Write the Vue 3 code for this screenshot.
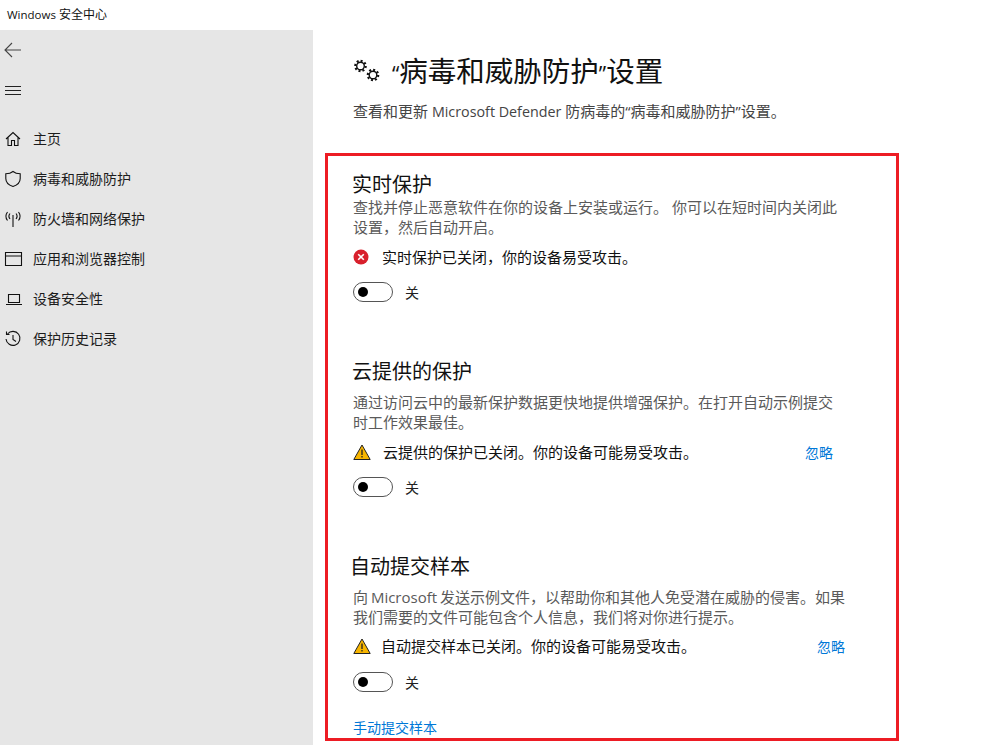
<script setup>
const nav = [
  { label: '主页', icon: 'home' },
  { label: '病毒和威胁防护', icon: 'shield' },
  { label: '防火墙和网络保护', icon: 'wifi' },
  { label: '应用和浏览器控制', icon: 'browser' },
  { label: '设备安全性', icon: 'laptop' },
  { label: '保护历史记录', icon: 'history' },
]
</script>

<template>
  <div class="window">
    <header class="titlebar"><span class="win">Windows</span> 安全中心</header>
    <div class="body">
      <aside class="sidebar">
        <div class="tool">
          <svg width="20" height="20" viewBox="0 0 20 20" fill="none" stroke="#444" stroke-width="1.1">
            <path d="M2 10H18M9 3L2 10L9 17" />
          </svg>
        </div>
        <div class="tool">
          <svg width="20" height="20" viewBox="0 0 20 20" fill="none" stroke="#222" stroke-width="1">
            <path d="M2 6.5H18M2 10.5H18M2 14.5H18" />
          </svg>
        </div>
        <nav class="nav">
          <div v-for="item in nav" :key="item.label" class="nav-item">
            <svg width="20" height="20" viewBox="0 0 20 20" fill="none" stroke="#111" stroke-width="1.1">
              <path v-if="item.icon === 'home'" d="M3 10L10 3.5L17 10M5 8.5V16.5H8.5V11.5H11.5V16.5H15V8.5" />
              <path v-else-if="item.icon === 'shield'" d="M10 2.5C8 4.2 5.5 4.8 2.8 4.8V9.5C2.8 13.5 6 16.2 10 17.5C14 16.2 17.2 13.5 17.2 9.5V4.8C14.5 4.8 12 4.2 10 2.5Z" />
              <template v-else-if="item.icon === 'wifi'">
                <path d="M10 6V18" />
                <path d="M7 4.5C5.8 6 5.8 8.5 7 10M13 4.5C14.2 6 14.2 8.5 13 10M4.5 3C2.6 5.5 2.6 9 4.5 11.5M15.5 3C17.4 5.5 17.4 9 15.5 11.5" />
              </template>
              <path v-else-if="item.icon === 'browser'" d="M2.5 3.5H18.5V16.5H2.5ZM2.5 7H18.5" />
              <path v-else-if="item.icon === 'laptop'" d="M5.5 5.5H16.5V13.5H5.5ZM3 15.5H19" />
              <template v-else>
                <path d="M4.5 5A7 7 0 1 1 3 10" />
                <path d="M3.5 2.5V5.5H6.5M10 6V10.5L13 12.5" />
              </template>
            </svg>
            <span>{{ item.label }}</span>
          </div>
        </nav>
      </aside>

      <main class="main">
        <div class="page-head">
          <svg class="gears" width="28" height="28" viewBox="0 0 28 28" fill="none" stroke="#111">
            <circle cx="7.5" cy="9" r="3.8" stroke-width="1.4" />
            <circle cx="7.5" cy="9" r="5.2" stroke-width="2.2" stroke-dasharray="2 2" />
            <circle cx="20" cy="18" r="3.8" stroke-width="1.4" />
            <circle cx="20" cy="18" r="5.2" stroke-width="2.2" stroke-dasharray="2 2" />
          </svg>
          <h1><span class="q">“</span>病毒和威胁防护<span class="q">”</span>设置</h1>
        </div>
        <p class="subtitle">查看和更新 <span class="latin">Microsoft Defender</span> 防病毒的“病毒和威胁防护”设置。</p>

        <div class="panel">
          <section class="block first">
            <h2>实时保护</h2>
            <p class="desc">查找并停止恶意软件在你的设备上安装或运行。 你可以在短时间内关闭此设置，然后自动开启。</p>
            <div class="status">
              <svg class="st-icon" width="16" height="16" viewBox="0 0 16 16">
                <circle cx="8" cy="8" r="7.5" fill="#d8202c" />
                <path d="M5.2 5.2L10.8 10.8M10.8 5.2L5.2 10.8" stroke="#fff" stroke-width="1.6" />
              </svg>
              <span class="st-text t1">实时保护已关闭，你的设备易受攻击。</span>
            </div>
            <div class="switch-row">
              <span class="switch"><i></i></span>
              <span>关</span>
            </div>
          </section>

          <section class="block second">
            <h2>云提供的保护</h2>
            <p class="desc">通过访问云中的最新保护数据更快地提供增强保护。在打开自动示例提交时工作效果最佳。</p>
            <div class="status">
              <svg class="st-icon" width="18" height="16" viewBox="0 0 18 16">
                <path d="M9 1L17.2 15.5H0.8Z" fill="#f7b500" stroke="#222" stroke-width="1" />
                <path d="M9 5.5V11M9 12V13.6" stroke="#222" stroke-width="1.3" />
              </svg>
              <span class="st-text t2">云提供的保护已关闭。你的设备可能易受攻击。</span>
              <a class="ignore">忽略</a>
            </div>
            <div class="switch-row">
              <span class="switch"><i></i></span>
              <span>关</span>
            </div>
          </section>

          <section class="block third">
            <h2>自动提交样本</h2>
            <p class="desc">向 Microsoft 发送示例文件，以帮助你和其他人免受潜在威胁的侵害。如果我们需要的文件可能包含个人信息，我们将对你进行提示。</p>
            <div class="status">
              <svg class="st-icon" width="18" height="16" viewBox="0 0 18 16">
                <path d="M9 1L17.2 15.5H0.8Z" fill="#f7b500" stroke="#222" stroke-width="1" />
                <path d="M9 5.5V11M9 12V13.6" stroke="#222" stroke-width="1.3" />
              </svg>
              <span class="st-text t3">自动提交样本已关闭。你的设备可能易受攻击。</span>
              <a class="ignore">忽略</a>
            </div>
            <div class="switch-row">
              <span class="switch"><i></i></span>
              <span>关</span>
            </div>
            <a class="manual">手动提交样本</a>
          </section>
        </div>
      </main>
    </div>
  </div>
</template>

<style>
html, body { margin: 0; background: #fff; overflow: hidden; }
</style>

<style scoped>
.window {
  width: 1001px;
  height: 745px;
  overflow: hidden;
  display: flex;
  flex-direction: column;
  background: #fff;
  color: #111;
  font-family: "Open Sans", "Noto Sans CJK SC", sans-serif;
}
.titlebar {
  height: 30px;
  flex: none;
  padding-left: 7px;
  font-size: 12px;
  line-height: 30px;
  color: #111;
}
.win { font-size: 11.5px; }
.body { flex: 1; display: flex; min-height: 0; }
.sidebar { width: 313px; flex: none; background: #e6e6e6; }
.tool { height: 40px; padding-left: 3px; display: flex; align-items: center; }
.nav { margin-top: 9px; }
.nav-item {
  height: 40px;
  display: flex;
  align-items: center;
  gap: 10px;
  padding-left: 3px;
  font-size: 14px;
  color: #1c1c1c;
}
.nav-item span { padding-bottom: 2px; }
.main { flex: 1; padding: 0 0 0 12px; min-width: 0; }
.page-head { display: flex; align-items: center; height: 40px; margin-top: 21px; padding-left: 28px; }
.gears { flex: none; }
h1 { margin: 2px 0 0 11px; font-size: 28.5px; font-weight: 400; line-height: 40px; color: #111; white-space: nowrap; }
.q { font-size: 21px; }
.subtitle { margin: 9px 0 0 28px; height: 22px; font-size: 15px; line-height: 22px; color: #444; white-space: nowrap; }
.latin { font-size: 14.3px; }
.panel {
  margin-top: 31px;
  width: 574px;
  height: 588px;
  box-sizing: border-box;
  border: 3px solid #ed1c24;
  padding: 0 0 0 25px;
}
.block { width: 492px; }
.first { padding-top: 15px; }
.second { padding-top: 56px; }
.third { padding-top: 56px; }
h2 { margin: 0 0 0 -1px; font-size: 20px; font-weight: 400; line-height: 28px; color: #111; }
.third h2 { margin-left: -3px; }
.desc { margin: 0; font-size: 15px; line-height: 20px; color: #5a5a5a; }
.first .desc { margin-top: -2px; }
.second .desc { margin-top: 6px; width: 484px; }
.third .desc { margin-top: 6px; width: 497px; word-spacing: -1px; }
.status { display: flex; align-items: center; height: 20px; margin-top: 10px; }
.third .status { margin-top: 9px; }
.second .status { width: 480px; }
.st-text { font-size: 15px; line-height: 20px; color: #111; white-space: nowrap; }
.st-icon { flex: none; }
.t1 { margin-left: 13px; }
.t2 { margin-left: 12px; }
.t3 { margin-left: 10px; }
.ignore { margin-left: auto; font-size: 14px; color: #0078d7; }
.switch-row { display: flex; align-items: center; gap: 12px; height: 20px; margin-top: 15px; font-size: 14px; color: #222; }
.third .switch-row { margin-top: 16px; }
.switch {
  width: 40px;
  height: 20px;
  box-sizing: border-box;
  border: 1px solid #555;
  border-radius: 10px;
  display: flex;
  align-items: center;
  padding-left: 4px;
}
.switch i { width: 10px; height: 10px; border-radius: 50%; background: #000; display: block; }
.manual { display: block; margin-top: 26px; font-size: 14px; line-height: 20px; color: #0078d7; }
</style>
